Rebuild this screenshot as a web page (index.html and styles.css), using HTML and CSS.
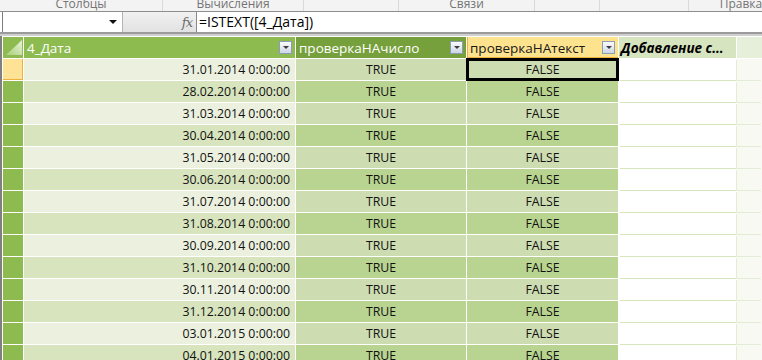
FILE: index.html
```html
<!DOCTYPE html>
<html lang="ru">
<head>
    <meta charset="UTF-8">
    <meta name="viewport" content="width=device-width, initial-scale=1.0">
    <title>PowerPivot — таблица</title>
    <link rel="stylesheet" href="styles.css">
</head>
<body>
    <div class="ribbon">
        <div class="group g1"><span>Столбцы</span></div>
        <div class="group g2"><span>Вычисления</span></div>
        <div class="group g3"></div>
        <div class="group g4"><span>Связи</span></div>
        <div class="group g5"></div>
        <div class="group g6"></div>
        <div class="group g7"><span>Правка</span></div>
    </div>

    <div class="formula-bar">
        <div class="name-box"><span class="dd-arrow"></span></div>
        <div class="fx-box"><span class="fx">fx</span></div>
        <div class="formula">=ISTEXT([4_Дата])</div>
    </div>
    <div class="split"></div>

    <div class="sheet">
        <div class="row head">
            <div class="corner">
                <svg width="16" height="15" viewBox="0 0 16 15">
                    <defs>
                        <linearGradient id="tri" x1="0" y1="1" x2="1" y2="0">
                            <stop offset="0" stop-color="#a9cf76"/>
                            <stop offset="1" stop-color="#e9f3dc"/>
                        </linearGradient>
                    </defs>
                    <polygon points="16,0 16,15 0,15" fill="url(#tri)"/>
                </svg>
            </div>
            <div class="hcell c1"><span>4_Дата</span><i class="filter"></i></div>
            <div class="hcell c2"><span>проверкаНАчисло</span><i class="filter"></i></div>
            <div class="hcell c3"><span>проверкаНАтекст</span><i class="filter"></i></div>
            <div class="hcell c4"><span>Добавление с...</span></div>
            <div class="hcell c5"></div>
        </div>

        <div class="row odd">
            <div class="rh active"></div>
            <div class="cell date">31.01.2014 0:00:00</div>
            <div class="cell bool">TRUE</div>
            <div class="cell bool selected">FALSE</div>
            <div class="cell blank"></div>
            <div class="cell rest"></div>
        </div>
        <div class="row even">
            <div class="rh"></div>
            <div class="cell date">28.02.2014 0:00:00</div>
            <div class="cell bool">TRUE</div>
            <div class="cell bool">FALSE</div>
            <div class="cell blank"></div>
            <div class="cell rest"></div>
        </div>
        <div class="row odd">
            <div class="rh"></div>
            <div class="cell date">31.03.2014 0:00:00</div>
            <div class="cell bool">TRUE</div>
            <div class="cell bool">FALSE</div>
            <div class="cell blank"></div>
            <div class="cell rest"></div>
        </div>
        <div class="row even">
            <div class="rh"></div>
            <div class="cell date">30.04.2014 0:00:00</div>
            <div class="cell bool">TRUE</div>
            <div class="cell bool">FALSE</div>
            <div class="cell blank"></div>
            <div class="cell rest"></div>
        </div>
        <div class="row odd">
            <div class="rh"></div>
            <div class="cell date">31.05.2014 0:00:00</div>
            <div class="cell bool">TRUE</div>
            <div class="cell bool">FALSE</div>
            <div class="cell blank"></div>
            <div class="cell rest"></div>
        </div>
        <div class="row even">
            <div class="rh"></div>
            <div class="cell date">30.06.2014 0:00:00</div>
            <div class="cell bool">TRUE</div>
            <div class="cell bool">FALSE</div>
            <div class="cell blank"></div>
            <div class="cell rest"></div>
        </div>
        <div class="row odd">
            <div class="rh"></div>
            <div class="cell date">31.07.2014 0:00:00</div>
            <div class="cell bool">TRUE</div>
            <div class="cell bool">FALSE</div>
            <div class="cell blank"></div>
            <div class="cell rest"></div>
        </div>
        <div class="row even">
            <div class="rh"></div>
            <div class="cell date">31.08.2014 0:00:00</div>
            <div class="cell bool">TRUE</div>
            <div class="cell bool">FALSE</div>
            <div class="cell blank"></div>
            <div class="cell rest"></div>
        </div>
        <div class="row odd">
            <div class="rh"></div>
            <div class="cell date">30.09.2014 0:00:00</div>
            <div class="cell bool">TRUE</div>
            <div class="cell bool">FALSE</div>
            <div class="cell blank"></div>
            <div class="cell rest"></div>
        </div>
        <div class="row even">
            <div class="rh"></div>
            <div class="cell date">31.10.2014 0:00:00</div>
            <div class="cell bool">TRUE</div>
            <div class="cell bool">FALSE</div>
            <div class="cell blank"></div>
            <div class="cell rest"></div>
        </div>
        <div class="row odd">
            <div class="rh"></div>
            <div class="cell date">30.11.2014 0:00:00</div>
            <div class="cell bool">TRUE</div>
            <div class="cell bool">FALSE</div>
            <div class="cell blank"></div>
            <div class="cell rest"></div>
        </div>
        <div class="row even">
            <div class="rh"></div>
            <div class="cell date">31.12.2014 0:00:00</div>
            <div class="cell bool">TRUE</div>
            <div class="cell bool">FALSE</div>
            <div class="cell blank"></div>
            <div class="cell rest"></div>
        </div>
        <div class="row odd">
            <div class="rh"></div>
            <div class="cell date">03.01.2015 0:00:00</div>
            <div class="cell bool">TRUE</div>
            <div class="cell bool">FALSE</div>
            <div class="cell blank"></div>
            <div class="cell rest"></div>
        </div>
        <div class="row even">
            <div class="rh"></div>
            <div class="cell date">04.01.2015 0:00:00</div>
            <div class="cell bool">TRUE</div>
            <div class="cell bool">FALSE</div>
            <div class="cell blank"></div>
            <div class="cell rest"></div>
        </div>
    </div>
</body>
</html>
```

FILE: styles.css
```css
body {
    margin: 0;
    width: 762px;
    height: 360px;
    overflow: hidden;
    background-color: #fff;
    font-family: "Open Sans", "Noto Sans", sans-serif;
    color: #111;
}

/* лента */
.ribbon {
    display: flex;
    height: 11px;
    overflow: hidden;
    background-color: #f3f3f3;
}
.group {
    flex: none;
    display: flex;
    justify-content: center;
    align-items: flex-end;
    border-right: 1px solid #d9d9d9;
    box-sizing: border-box;
    height: 11px;
}
.group span {
    font-size: 12px;
    line-height: 12px;
    color: #747474;
    margin-bottom: 1px;
    white-space: nowrap;
}
.g1 { width: 163px; }
.g2 { width: 141px; }
.g3 { width: 95px; }
.g4 { width: 136px; }
.g5 { width: 65px; }
.g6 { width: 89px; }
.g7 { width: 104px; border-right: none; }

/* строка формул */
.formula-bar {
    display: flex;
    height: 20px;
    border-top: 1px solid #8e8e8e;
    background-color: #fff;
}
.name-box {
    width: 120px;
    margin-left: 2px;
    border-left: 1px solid #7d7d7d;
    display: flex;
    justify-content: flex-end;
    align-items: center;
    padding-right: 5px;
    box-sizing: border-box;
}
.dd-arrow {
    width: 0;
    height: 0;
    border-left: 4px solid transparent;
    border-right: 4px solid transparent;
    border-top: 4px solid #111;
}
.fx-box {
    width: 75px;
    border-left: 1px solid #b4b4b4;
    border-right: 1px solid #8a8a8a;
    background: linear-gradient(#f1f1f1, #e2e2e2);
    display: flex;
    justify-content: flex-end;
    align-items: center;
    padding-right: 4px;
    box-sizing: border-box;
}
.fx {
    font-family: "DejaVu Serif", "Liberation Serif", serif;
    font-style: italic;
    font-size: 13px;
    color: #6b6b6b;
    letter-spacing: -1px;
}
.formula {
    flex: 1;
    padding-left: 2px;
    font-size: 14px;
    line-height: 20px;
    color: #000;
}
.split {
    height: 2px;
    background-color: #9b9b9b;
    border-bottom: 2px solid #cfcfcf;
}

/* таблица */
.sheet {
    display: flex;
    flex-direction: column;
    gap: 1px;
    padding: 1px 0 0 1px;
    border-left: 2px solid #808080;
    background-color: #fff;
}
.row {
    display: grid;
    grid-template-columns: 20px 271px 170px 151px 117px 25px;
    gap: 1px;
    height: 21px;
    flex: none;
}
.corner {
    background-color: #8dbb4f;
    display: flex;
    align-items: flex-end;
    justify-content: flex-end;
    padding: 0 1px 3px 0;
}
.corner svg {
    display: block;
}
.hcell {
    display: flex;
    align-items: center;
    padding-left: 3px;
    font-size: 13.5px;
    white-space: nowrap;
    overflow: hidden;
}
.hcell span {
    flex: 1;
}
.hcell.c1 {
    background-color: #8dbb4f;
    color: #fff;
}
.hcell.c2 {
    background-color: #76a03b;
    color: #fff;
}
.hcell.c3 {
    background-color: #fee38f;
    box-shadow: inset 1px -1px 0 #f0b13c;
    color: #1a1a1a;
}
.hcell.c4 {
    background-color: #d6e4bf;
    font-weight: bold;
    font-style: italic;
    color: #000;
    padding-left: 2px;
}
.hcell.c5 {
    background-color: #e6efd9;
}
.filter {
    flex: none;
    position: relative;
    width: 11px;
    height: 11px;
    margin-right: 3px;
    border: 1px solid #8c9cb4;
    background: linear-gradient(#fbfcfe, #ccd6e5);
}
.filter::after {
    content: "";
    position: absolute;
    left: 3px;
    top: 4px;
    border-left: 3px solid transparent;
    border-right: 3px solid transparent;
    border-top: 3px solid #3c3c3c;
}

.rh {
    background-color: #8dbb4f;
}
.rh.active {
    background-color: #fee396;
    box-shadow: inset -1px -1px 0 #f0b13c;
}
.cell {
    font-size: 12.3px;
    line-height: 21px;
    white-space: nowrap;
}
.cell.date {
    text-align: right;
    padding-right: 5px;
}
.cell.bool {
    text-align: center;
}
.odd .date { background-color: #ebf1de; }
.even .date { background-color: #d7e4bd; }
.odd .bool { background-color: #cddcb1; }
.even .bool { background-color: #b9d490; }
.cell.blank {
    background-color: #fff;
    box-shadow: 1px 1px 0 #d6e4bf;
}
.cell.rest {
    background-color: #f7f9f2;
    box-shadow: -1px 1px 0 #e3ecd5;
}
.cell.selected {
    position: relative;
    z-index: 1;
    outline: 3px solid #000;
    outline-offset: -2px;
}
```
